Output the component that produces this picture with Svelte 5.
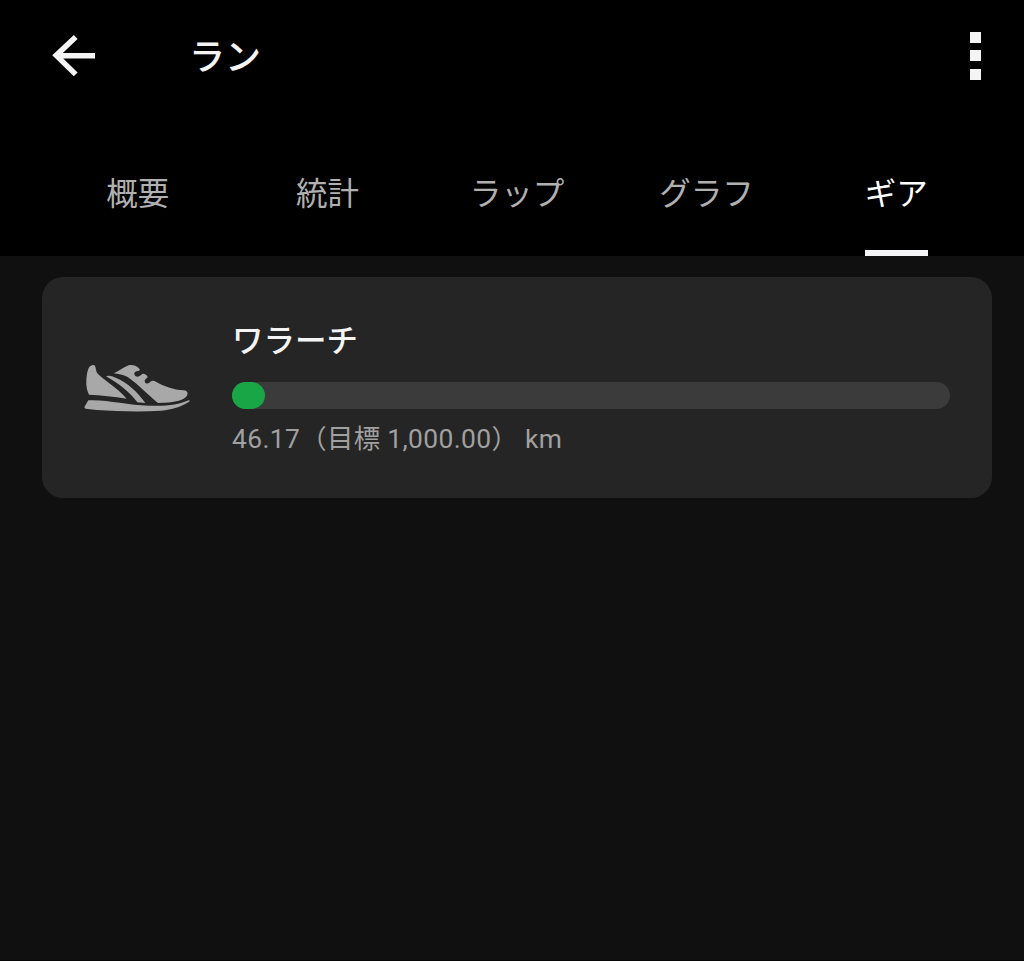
<script lang="ts">
    interface Gear {
        name: string;
        distance: number;
        goal: number;
    }

    const title = 'ラン';
    const tabs = ['概要', '統計', 'ラップ', 'グラフ', 'ギア'];

    const gear: Gear = { name: 'ワラーチ', distance: 46.17, goal: 1000 };

    let selectedTab = $state('ギア');

    const percent = (gear.distance / gear.goal) * 100;
    const goalText = gear.goal.toLocaleString('en-US', { minimumFractionDigits: 2 });
</script>

<main class="screen">
    <header>
        <div class="toolbar">
            <button class="back" aria-label="戻る">
                <svg width="44" height="44" viewBox="0 0 44 44">
                    <path d="M24.5 3.5 L5 22 L24.5 41 M5 22.3 H43.8" transform="translate(-.8 -.6)" />
                </svg>
            </button>
            <h1>{title}</h1>
            <button class="menu" aria-label="メニュー">
                <span></span>
                <span></span>
                <span></span>
            </button>
        </div>

        <nav>
            {#each tabs as tab}
                <button
                    class="tab"
                    class:active={tab === selectedTab}
                    onclick={() => (selectedTab = tab)}
                >
                    <span>{tab}</span>
                </button>
            {/each}
        </nav>
    </header>

    <section class="card">
        <!-- Shoe -->
        <svg class="shoe" width="125" height="75" viewBox="0 0 375 225">
            <path d="M42 134 C36 122 33 109 34 93 C35 73 38 56 45 49 C50 45 57 43 60 47 C63 53 62 62 67 70 C75 80 88 87 99 97 C120 113 141 129 155 146 C117 139 78 136 42 134 Z" />
            <path d="M93 79 C100 75 111 78 122 83 C158 98 188 126 211 159 L187 157 C164 127 135 102 93 79 Z" />
            <path d="M116 70 C130 65 146 52 161 46 C171 44 184 46 193 56 C196 60 193 63 188 63 C180 64 176 69 179 75 C184 84 194 79 199 74 C204 69 212 72 218 80 C217 85 210 86 209 92 C209 100 217 103 223 98 C229 92 235 91 243 95 C267 109 294 119 327 121 C337 122 340 129 336 137 C328 150 299 158 249 159 C221 137 190 103 158 81 C145 75 130 72 116 70 Z" />
            <path d="M40 151 C97 148 157 166 221 167 C274 169 309 165 341 151 C345 150 346 153 341 156 C317 171 292 179 258 182 C195 186 128 184 65 180 L32 176 C27 174 28 171 30 168 Z" />
        </svg>
        <div class="info">
            <h2>{gear.name}</h2>
            <div class="track">
                <div class="fill" style="width: {percent}%"></div>
            </div>
            <p>{gear.distance}（目標 {goalText}） km</p>
        </div>
    </section>
</main>

<style>
    :global(body) {
        margin: 0;
        background: #101010;
    }

    .screen {
        height: 961px;
        box-sizing: border-box;
        overflow: hidden;
        background: #101010;
        border-bottom: 1px solid #060606;
        font-family: Roboto, 'Noto Sans CJK JP', sans-serif;
    }

    button {
        padding: 0;
        border: none;
        background: none;
        font: inherit;
        cursor: pointer;
    }

    header {
        height: 256px;
        background: #000;
    }

    .toolbar {
        display: flex;
        align-items: center;
        height: 111px;
        padding: 0 43px 0 52px;
        box-sizing: border-box;
    }

    .back {
        width: 44px;
        height: 44px;
    }

    .back svg {
        display: block;
        fill: none;
        stroke: #f4f4f4;
        stroke-width: 5.5;
    }

    h1 {
        flex: 1;
        margin: 0 0 0 93px;
        padding-top: 4px;
        color: #f4f4f4;
        font-size: 36px;
        font-weight: 500;
        line-height: 50px;
    }

    .menu {
        display: flex;
        flex-direction: column;
        gap: 7.5px;
    }

    .menu span {
        width: 11px;
        height: 11px;
        background: #f4f4f4;
    }

    /* Tabs */
    nav {
        display: flex;
        height: 145px;
        padding: 0 33px 0 43px;
    }

    .tab {
        flex: 1;
        display: flex;
        justify-content: center;
        color: #b0b0b0;
        font-size: 31.5px;
        line-height: 44px;
    }

    .tab span {
        height: 145px;
        padding-top: 62px;
        box-sizing: border-box;
        border-bottom: 6px solid transparent;
    }

    .tab.active {
        color: #fff;
    }

    .tab.active span {
        border-color: #f4f4f6;
    }

    /* Gear card */
    .card {
        display: flex;
        height: 221px;
        margin: 21px 32px 0 42px;
        padding: 0 42px 0 33px;
        box-sizing: border-box;
        border-radius: 21px;
        background: #252525;
    }

    .shoe {
        flex: none;
        margin-top: 73px;
        fill: #a8a8a8;
    }

    .info {
        flex: 1;
        margin-left: 32px;
    }

    h2 {
        margin: 43px 0 18px;
        color: #f4f4f4;
        font-size: 31.5px;
        font-weight: 500;
        line-height: 44px;
    }

    .track {
        height: 27px;
        border-radius: 14px;
        background: #3b3b3b;
    }

    .fill {
        height: 100%;
        border-radius: 14px;
        background: #18a646;
    }

    p {
        margin: 11px 0 0;
        color: #a0a0a0;
        font-size: 26.4px;
        letter-spacing: 0.37px;
        line-height: 38px;
        white-space: pre;
    }
</style>
